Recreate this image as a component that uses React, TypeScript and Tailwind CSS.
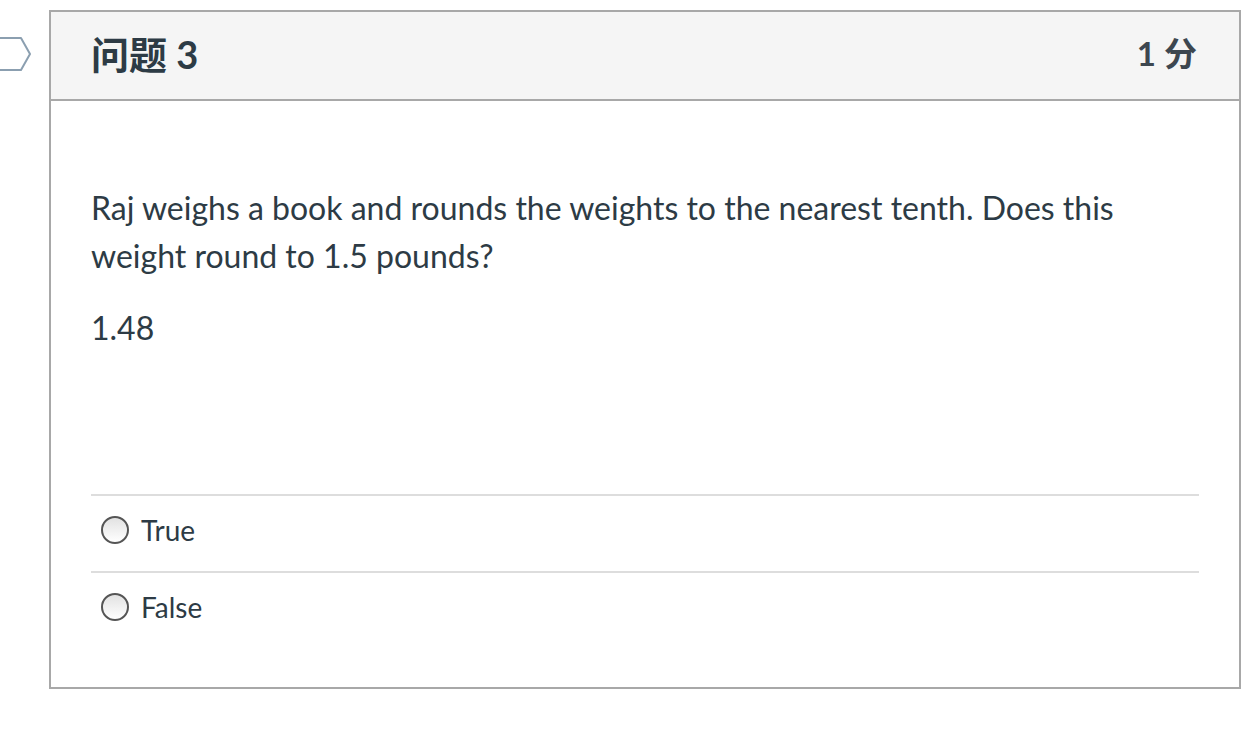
import React from 'react';

const answers = ['True', 'False'];

const App: React.FC = () => {
  return (
    <div
      className="relative min-h-screen bg-white pt-[10px] pl-[49px] text-[#2d3b45]"
      style={{ fontFamily: 'Lato, "Noto Sans CJK SC", sans-serif' }}
    >
      {/* flag marker */}
      <svg className="absolute left-0 top-[36px]" width="34" height="36" viewBox="0 0 34 36">
        <path d="M-4 2 H21 L30 18 L21 34 H-4" fill="none" stroke="#8b9fb0" strokeWidth="2" strokeLinejoin="round" />
      </svg>

      <div className="w-[1192px] h-[679px] border-2 border-[#a8a8a8] flex flex-col">
        <div className="h-[89px] shrink-0 bg-[#f5f5f5] border-b-2 border-[#a8a8a8] flex items-center justify-between px-[40px] pb-[4px]">
          <h2 className="text-[38px] font-bold leading-none">问题 3</h2>
          <div className="text-[33px] font-bold leading-none text-[#3d4750] pr-[2px]">1 分</div>
        </div>

        <div className="flex-1 px-[40px] pt-[83px]">
          <p className="text-[32px] leading-[48px]">
            Raj weighs a book and rounds the weights to the nearest tenth. Does this weight round to 1.5 pounds?
          </p>
          <p className="text-[32px] leading-[48px] mt-[24px]">1.48</p>

          <div className="mt-[142px]">
            {answers.map(a => (
              <div key={a} className="h-[77px] border-t-2 border-[#dddddd] flex items-center pl-[10px] gap-[12px] pb-[7px]">
                <span className="w-[28px] h-[28px] rounded-full border-2 border-[#555] bg-gradient-to-b from-[#e2e2e2] to-white" />
                <span className="text-[28px] leading-none">{a}</span>
              </div>
            ))}
          </div>
        </div>
      </div>
    </div>
  );
};

export default App;
